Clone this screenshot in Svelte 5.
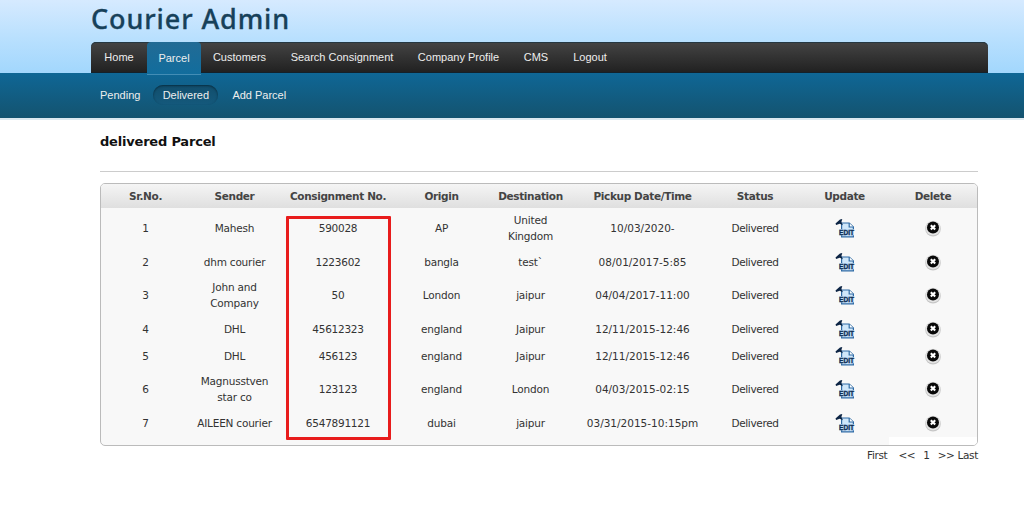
<script>
  const menu = [
    { label: 'Home', width: 56 },
    { label: 'Parcel', width: 54, active: true },
    { label: 'Customers', width: 77 },
    { label: 'Search Consignment', width: 128 },
    { label: 'Company Profile', width: 105 },
    { label: 'CMS', width: 50 },
    { label: 'Logout', width: 58 }
  ];
  const columns = ['Sr.No.', 'Sender', 'Consignment No.', 'Origin', 'Destination', 'Pickup Date/Time', 'Status', 'Update', 'Delete'];
  const rows = [
    ['1', 'Mahesh', '590028', 'AP', 'United\nKingdom', '10/03/2020-'],
    ['2', 'dhm courier', '1223602', 'bangla', 'test`', '08/01/2017-5:85'],
    ['3', 'John and\nCompany', '50', 'London', 'jaipur', '04/04/2017-11:00'],
    ['4', 'DHL', '45612323', 'england', 'Jaipur', '12/11/2015-12:46'],
    ['5', 'DHL', '456123', 'england', 'Jaipur', '12/11/2015-12:46'],
    ['6', 'Magnusstven\nstar co', '123123', 'england', 'London', '04/03/2015-02:15'],
    ['7', 'AILEEN courier', '6547891121', 'dubai', 'jaipur', '03/31/2015-10:15pm']
  ];
</script>

<header>
  <h1>Courier Admin</h1>
  <nav class="main">
    {#each menu as item}
      <a class:active={item.active} style:width="{item.width}px">{item.label}</a>
    {/each}
  </nav>
</header>
<nav class="sub">
  <a>Pending</a>
  <a class="current">Delivered</a>
  <a>Add Parcel</a>
</nav>

<main>
  <h2>delivered Parcel</h2>
  <div class="table">
    <div class="row head">
      {#each columns as column}<span>{column}</span>{/each}
    </div>
    {#each rows as row}
      <div class="row" class:tall={row.some((cell) => cell.includes('\n'))}>
        {#each row as cell, i}<span class:number={i === 2} class:date={i === 5}>{cell}</span>{/each}
        <span class="status">Delivered</span>
        <span>
          <svg class="edit" width="20" height="20" viewBox="0 0 20 20">
            <path d="M6.6 5h7.6l4.2 4v9.8H6.6z" fill="#cfe7fa" stroke="#2f6ba5" stroke-width="1.2" />
            <path d="M14.2 5v4h4.2" fill="#fff" stroke="#2f6ba5" stroke-width="1.2" />
            <path d="M0.5 5.4L5 1.4l2.3-.4-.9 2.9 1.5 3.4-3.2-1.6-3.6 1.3z" fill="#0d2545" />
            <rect x="4" y="11" width="15" height="6.4" fill="#bcdaf4" />
            <text x="4" y="17" textLength="15" lengthAdjust="spacingAndGlyphs">EDIT</text>
          </svg>
        </span>
        <span>
          <svg class="delete" width="18" height="18" viewBox="0 0 18 18">
            <circle cx="9" cy="9.8" r="7.8" fill="#c6c6c6" />
            <circle cx="9" cy="9" r="7.3" fill="#e4e4e4" />
            <circle cx="9" cy="8.4" r="6" fill="#090909" />
            <path d="M6.8 6.2l4.4 4.4M11.2 6.2l-4.4 4.4" stroke="#fff" stroke-width="2.1" />
          </svg>
        </span>
      </div>
    {/each}
    <div class="highlight"></div>
    <div class="patch"></div>
  </div>
  <div class="pager"><span>First</span><span>&lt;&lt;</span><span>1</span><span>&gt;&gt; Last</span></div>
</main>

<style>
  :global(body) { margin: 0; background: #fff; }
  header {
    box-sizing: border-box;
    height: 73px;
    padding: 0 36px 0 91px;
    background: linear-gradient(#d6eaff, #b9e0fe 52%, #a2d7fd);
  }
  h1 {
    margin: 0;
    height: 42px;
    font: 500 27px/37px "Noto Sans", sans-serif;
    letter-spacing: 0.9px;
    color: #17415a;
    -webkit-text-stroke: 0.3px #17415a;
    white-space: nowrap;
  }
  nav { font-family: "Liberation Sans", Arial, sans-serif; font-size: 11px; color: #eee; }
  .main {
    display: flex;
    box-sizing: border-box;
    height: 31px;
    border-radius: 5px 5px 0 0;
    background: linear-gradient(#444, #202020);
    box-shadow: inset 0 1px #253842, inset 0 -1px #14212a;
  }
  .main a { line-height: 31px; text-align: center; white-space: nowrap; }
  .main .active {
    position: relative;
    height: 33px;
    box-sizing: border-box;
    border-bottom: 1px solid #438db5;
    line-height: 33px;
    background: linear-gradient(#226b95, #126d9d);
    border-radius: 4px 4px 0 0;
  }
  .sub {
    display: flex;
    align-items: center;
    box-sizing: border-box;
    height: 47px;
    padding: 0 91px 1px 100px;
    border-bottom: 2px solid #dce8ef;
    background: linear-gradient(#0f6796, #14536f);
    background-clip: padding-box;
  }
  .sub a { line-height: 20px; }
  .sub .current {
    margin: 0 14px 0 13px;
    width: 65px;
    text-align: center;
    border-radius: 10px;
    background: linear-gradient(#124e6c, #14597c);
    box-shadow: inset 0 1px 2px #082f43;
  }
  main {
    padding: 12px 46px 0 100px;
    font: 10.5px/16px "DejaVu Sans", Verdana, sans-serif;
    color: #333;
  }
  h2 {
    margin: 0 0 11px;
    height: 39px;
    border-bottom: 1px solid #ccc;
    font-size: 13px;
    line-height: 19px;
    letter-spacing: -0.2px;
    color: #111;
  }
  .table {
    position: relative;
    box-sizing: border-box;
    width: 878px;
    height: 263px;
    border: 1px solid #bbb;
    border-radius: 5px;
    background: #f8f8f8;
    overflow: hidden;
  }
  .row {
    display: grid;
    grid-template-columns: 89px 89px 118px 89px 89px 135px 90px 89px 88px;
    align-items: center;
    text-align: center;
    height: 27px;
    letter-spacing: -0.2px;
  }
  .row.tall { height: 40px; }
  .row.head {
    height: 24px;
    font-weight: bold;
    letter-spacing: -0.35px;
    color: #444;
    background: linear-gradient(#f5f5f5, #dfdfdf);
  }
  .row > span { white-space: pre; }
  .row .number { letter-spacing: -0.25px; }
  .row .date { letter-spacing: 0; }
  .row .status { letter-spacing: -0.35px; }
  svg { display: block; margin: 0 auto; }
  .edit text { font: bold 7px "Liberation Sans", sans-serif; letter-spacing: 0; fill: #102f54; stroke: #102f54; stroke-width: 0.3px; }
  .highlight {
    position: absolute;
    left: 185px;
    top: 32px;
    width: 99px;
    height: 218px;
    border: 3px solid #e81c1c;
    border-radius: 1px;
  }
  .patch {
    position: absolute;
    right: 0;
    bottom: 0;
    width: 88px;
    height: 8px;
    background: #fff;
  }
  .pager { display: flex; justify-content: flex-end; gap: 8px; padding-top: 1px; letter-spacing: -0.35px; }
  .pager span:first-child { margin-right: 3px; }
</style>
